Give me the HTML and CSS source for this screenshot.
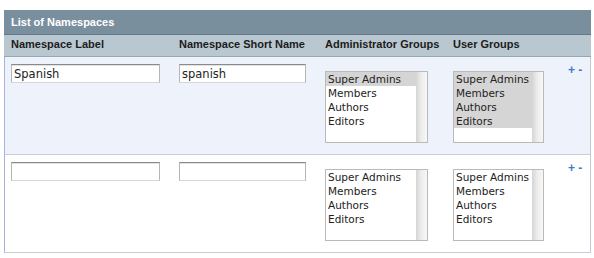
FILE: index.html
```html
<!DOCTYPE html>
<html>
	<head>
		<meta charset="utf-8">
		<title>List of Namespaces</title>
		<link rel="stylesheet" href="styles.css">
	</head>
	<body>

		<div class="panel">
			<div class="panel-title">List of Namespaces</div>

			<div class="grid head">
				<div>Namespace Label</div>
				<div>Namespace Short Name</div>
				<div>Administrator Groups</div>
				<div>User Groups</div>
				<div></div>
			</div>

			<!-- existing namespace -->
			<div class="grid row alt">
				<div><input class="field label" type="text" value="Spanish"></div>
				<div><input class="field short" type="text" value="spanish"></div>
				<div>
					<div class="listbox admin">
						<ul>
							<li class="sel">Super Admins</li>
							<li>Members</li>
							<li>Authors</li>
							<li>Editors</li>
						</ul>
						<span class="track"></span>
					</div>
				</div>
				<div>
					<div class="listbox user">
						<ul>
							<li class="sel">Super Admins</li>
							<li class="sel">Members</li>
							<li class="sel">Authors</li>
							<li class="sel">Editors</li>
						</ul>
						<span class="track"></span>
					</div>
				</div>
				<div class="actions"><a href="#">+</a> <a href="#">-</a></div>
			</div>

			<!-- empty row for a new one -->
			<div class="grid row">
				<div><input class="field label" type="text" value=""></div>
				<div><input class="field short" type="text" value=""></div>
				<div>
					<div class="listbox admin">
						<ul>
							<li>Super Admins</li>
							<li>Members</li>
							<li>Authors</li>
							<li>Editors</li>
						</ul>
						<span class="track"></span>
					</div>
				</div>
				<div>
					<div class="listbox user">
						<ul>
							<li>Super Admins</li>
							<li>Members</li>
							<li>Authors</li>
							<li>Editors</li>
						</ul>
						<span class="track"></span>
					</div>
				</div>
				<div class="actions"><a href="#">+</a> <a href="#">-</a></div>
			</div>
		</div>

	</body>
</html>
```

FILE: styles.css
```css
* {margin: 0; padding: 0; box-sizing: border-box;}

body {
	background: #fff;
	font-family: "Liberation Sans", Arial, sans-serif;
	color: #222;
}

.panel {
	width: 587px;
	margin: 10px 0 0 4px;
}

.panel-title {
	height: 25px;
	line-height: 24px;
	padding-left: 7px;
	background: #7a8f9e;
	border-bottom: 1px solid #627889;
	color: #fff;
	font-size: 11px;
	font-weight: bold;
}

.grid {
	display: grid;
	grid-template-columns: 168px 146px 128px 115px 1fr;
}

.head {
	height: 22px;
	padding: 3px 0 0 7px;
	background: #b9c8d0;
	border-bottom: 1px solid #93a7b5;
	font-size: 11px;
	font-weight: bold;
	color: #1c1c1c;
}

.row {
	height: 98px;
	padding: 7px 0 0 6px;
	background: #fff;
	border-left: 1px solid #a9b0dc;
	border-right: 1px solid #c6c8d0;
	border-bottom: 1px solid #c8ccd6;
}

.row.alt {
	background: #eef2fa;
}

.field {
	display: block;
	height: 19px;
	padding: 0 2px;
	border: 1px solid #b6b6b6;
	border-top-color: #8a8a8a;
	border-bottom-color: #d6d6d6;
	box-shadow: inset 0 1px 0 #e2e2e2;
	background: #fff;
	font-family: "DejaVu Sans", sans-serif;
	font-size: 11.5px;
	color: #222;
	outline: none;
}

.field.label {width: 149px;}
.field.short {width: 127px;}

.listbox {
	display: flex;
	height: 72px;
	margin-top: 7px;
	border: 1px solid #bababa;
	background: #fff;
	font-family: "DejaVu Sans", sans-serif;
	font-size: 10.5px;
	color: #222;
}

.listbox.admin {width: 103px;}
.listbox.user {width: 91px;}

.listbox ul {
	flex: 1;
	list-style: none;
}

.listbox li {
	height: 14px;
	line-height: 14px;
	padding-left: 2px;
	white-space: nowrap;
}

.listbox li.sel {
	background: #d5d5d5;
}

.listbox .track {
	width: 11px;
	background: linear-gradient(to right, #d4d4d4, #ececec 45%, #f7f7f7);
}

.actions {
	font-size: 12px;
	font-weight: bold;
	line-height: 12px;
}

.actions a {
	color: #3c7bc8;
	text-decoration: none;
}
```
